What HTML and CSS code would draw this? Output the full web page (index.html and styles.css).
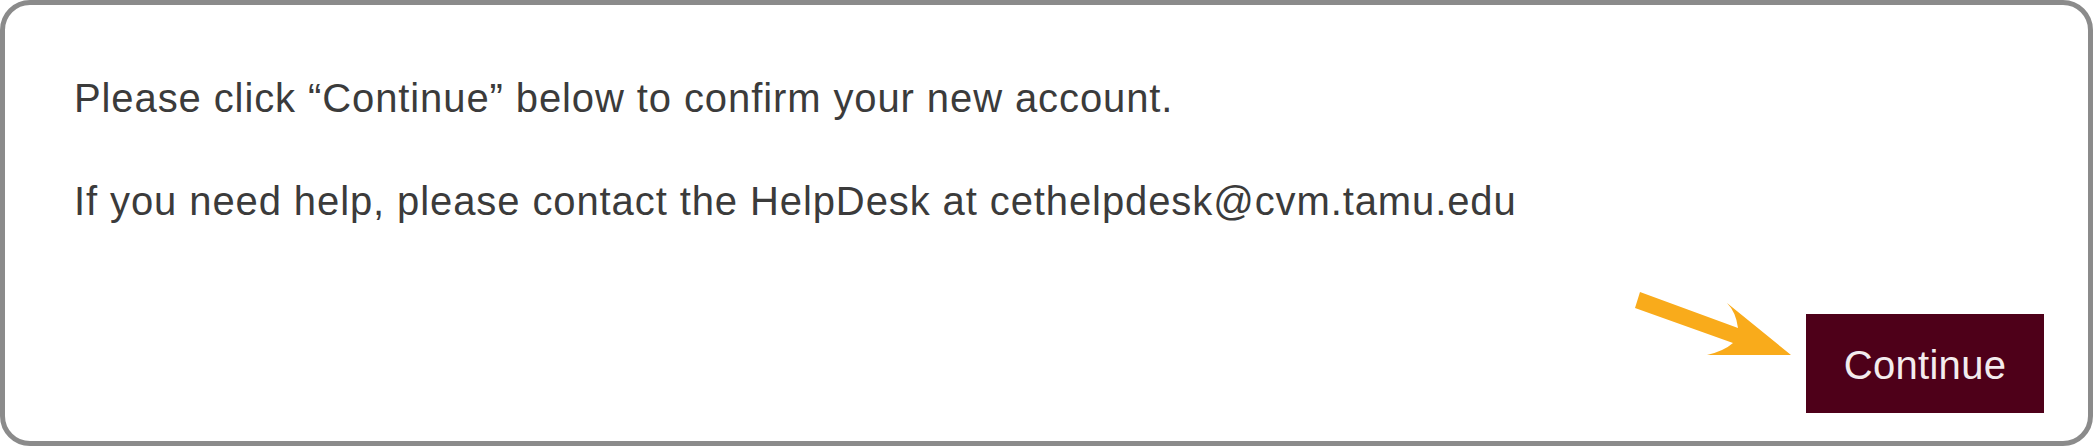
FILE: index.html
```html
<!DOCTYPE html>
<html lang="en">
  <head>
    <meta charset="UTF-8" />
    <meta name="viewport" content="width=device-width, initial-scale=1.0" />
    <title>Confirm account</title>

    <link rel="stylesheet" href="styles.css">
  </head>

  <body>
    <div class="card">
      <p class="msg">Please click “Continue” below to confirm your new account.</p>
      <p class="msg help">If you need help, please contact the HelpDesk at cethelpdesk@cvm.tamu.edu</p>

      <div class="actions">
        <button type="button" class="btn-continue">Continue</button>
      </div>

      <!-- orange pointer drawn over the card -->
      <svg class="pointer" width="170" height="75" viewBox="0 0 170 75">
        <path d="M10 7 L108 43 Q106 27 97 18 L161 70 L77 70 Q94 66 103 58 L5 23 Z" fill="#f9ab1b" />
      </svg>
    </div>
  </body>
</html>
```

FILE: styles.css
```css
  body {
    margin: 0;
    background: #ffffff;
    font-family: "Liberation Sans", Arial, sans-serif;
  }

  .card {
    position: relative;
    box-sizing: border-box;
    width: 2093px;
    height: 446px;
    border: 5px solid #8b8b8b;
    border-radius: 30px;
    padding: 69px 44px 0 69px;
    background: #ffffff;
  }

  .msg {
    margin: 0;
    font-size: 40px;
    line-height: 48px;
    letter-spacing: 0.9px;
    color: #3b3b3b;
  }

  .help {
    margin-top: 55px;
  }

  .actions {
    display: flex;
    justify-content: flex-end;
    margin-top: 89px;
  }

  .btn-continue {
    width: 238px;
    height: 99px;
    border: none;
    border-radius: 0;
    background: #4e0019;
    color: #f3ecee;
    font-family: "Liberation Sans", Arial, sans-serif;
    font-size: 40px;
    letter-spacing: 0.3px;
    padding: 0;
    padding-top: 4px;
    cursor: pointer;
  }

  .pointer {
    position: absolute;
    left: 1625px;
    top: 280px;
  }
```
